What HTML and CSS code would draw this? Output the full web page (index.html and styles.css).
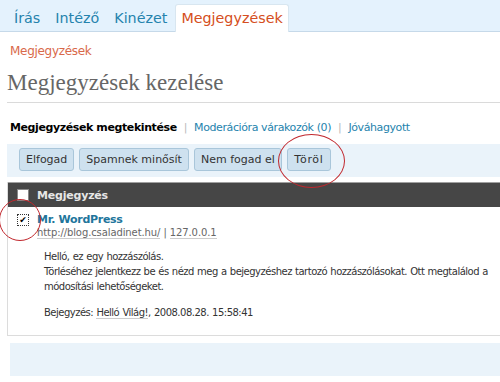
FILE: index.html
```html
<!DOCTYPE html>
<html>
  <head>
    <meta charset="UTF-8">
    <title>Megjegyzések kezelése</title>
    <link rel="stylesheet" href="styles.css">
  </head>
  <body>
    <div class="tabs">
      <a class="tab" href="#">Írás</a>
      <a class="tab" href="#">Intéző</a>
      <a class="tab" href="#">Kinézet</a>
      <a class="tab tab-current" href="#">Megjegyzések</a>
    </div>

    <div class="wrap">
      <div class="crumb">Megjegyzések</div>
      <h2 class="title">Megjegyzések kezelése</h2>

      <ul class="subsubsub">
        <li class="current">Megjegyzések megtekintése</li>
        <li><a href="#">Moderációra várakozók (0)</a></li>
        <li><a href="#">Jóváhagyott</a></li>
      </ul>

      <div class="tablenav">
        <button class="button">Elfogad</button>
        <button class="button">Spamnek minősít</button>
        <button class="button">Nem fogad el</button>
        <button class="button button-wide">Töröl</button>
        <span class="mark mark-delete"></span>
      </div>

      <div class="comments">
        <div class="comments-head">
          <span class="box"></span>
          <span>Megjegyzés</span>
        </div>
        <div class="comment">
          <div class="check-col">
            <span class="box box-checked">&#10004;</span>
            <span class="mark mark-check"></span>
          </div>
          <div class="comment-body">
            <a class="author" href="#">Mr. WordPress</a>
            <div class="author-meta"><span class="u">http://blog.csaladinet.hu/</span> | <span class="u">127.0.0.1</span></div>
            <p>Helló, ez egy hozzászólás.<br>Törléséhez jelentkezz be és nézd meg a bejegyzéshez tartozó hozzászólásokat. Ott megtalálod a módosítási lehetőségeket.</p>
            <p class="post">Bejegyzés: <span class="u">Helló Világ!</span>, 2008.08.28. 15:58:41</p>
          </div>
        </div>
      </div>

      <div class="tablenav tablenav-bottom"></div>
    </div>
  </body>
</html>
```

FILE: styles.css
```css
body {
  margin: 0;
  width: 520px;
  overflow: hidden;
  background: #fff;
  font-family: "DejaVu Sans", Verdana, sans-serif;
  color: #333;
}
a {
  text-decoration: none;
}

.tabs {
  display: flex;
  align-items: flex-end;
  height: 31px;
  padding-left: 7px;
  background: #e4f2fd;
  border-bottom: 1px solid #c6d9e9;
}
.tab {
  padding: 5px 7px 5px;
  font-size: 14.3px;
  color: #2583ad;
  margin-right: 1px;
  border-radius: 3px 3px 0 0;
}
.tab-current {
  background: #fff;
  color: #d54e21;
  margin-bottom: -1px;
  padding: 5px 5px 6px;
  border: 1px solid #d8e6f0;
  border-bottom: none;
}

.wrap {
  padding-left: 7px;
}
.crumb {
  padding: 12px 0 0 3px;
  font-size: 12px;
  letter-spacing: -0.3px;
  color: #d9694a;
}
.title {
  margin: 12px 0 0;
  padding-bottom: 6px;
  border-bottom: 1px solid #dadada;
  font-family: "Liberation Serif", Georgia, serif;
  font-weight: normal;
  font-size: 23px;
  color: #666;
}

.subsubsub {
  display: flex;
  margin: 0;
  padding: 18px 0 0 3px;
  list-style: none;
  font-size: 11px;
  letter-spacing: -0.4px;
}
.subsubsub li + li:before {
  content: "|";
  color: #bbb;
  padding: 0 7px;
}
.subsubsub .current {
  font-weight: bold;
  color: #000;
}
.subsubsub a {
  color: #2583ad;
}

.tablenav {
  position: relative;
  display: flex;
  gap: 5px;
  margin-top: 10px;
  padding: 4px 12px 6px;
  height: 23px;
  background: #eaf3fa;
}
.button {
  padding: 0 6px;
  font-family: inherit;
  font-size: 11px;
  color: #333;
  background: #cee1ef;
  border: 1px solid #a9c6da;
  border-radius: 3px;
}
.button-wide {
  min-width: 44px;
  letter-spacing: 0.6px;
}

.mark {
  position: absolute;
  border: 1px solid #c1272d;
  border-radius: 50%;
}
.mark-delete {
  left: 271px;
  top: -10px;
  width: 65px;
  height: 52px;
}
.mark-check {
  left: -18px;
  top: -14px;
  width: 40px;
  height: 40px;
}

.comments {
  margin-top: 5px;
  border: 1px solid #dcdcdc;
  border-top: none;
}
.comments-head {
  display: flex;
  align-items: center;
  gap: 8px;
  height: 24px;
  padding-left: 9px;
  background: #464646;
  border-top: 1px solid #a0a0a0;
  color: #e6e6e6;
  font-size: 11px;
  font-weight: bold;
  letter-spacing: -0.2px;
}
.box {
  display: block;
  width: 10px;
  height: 10px;
  background: #fff;
  border: 1px solid #888;
}
.box-checked {
  border-style: dotted;
  border-color: #333;
  font-size: 9px;
  line-height: 10px;
  text-align: center;
  color: #000;
}

.comment {
  display: flex;
  gap: 8px;
  padding: 6px 0 15px 9px;
}
.check-col {
  position: relative;
  padding-top: 1px;
}
.comment-body {
  font-size: 10px;
  letter-spacing: -0.15px;
}
.author {
  display: block;
  font-weight: bold;
  font-size: 11px;
  letter-spacing: -0.3px;
  color: #21759b;
}
.author-meta {
  margin-top: 1px;
  letter-spacing: -0.1px;
  color: #666;
}
.u {
  border-bottom: 1px solid #ccc;
}
.comment-body p {
  max-width: 460px;
  margin: 11px 0 0 7px;
  line-height: 15px;
  letter-spacing: -0.5px;
  word-spacing: 0.5px;
}
.comment-body .post {
  margin-top: 11px;
}

.tablenav-bottom {
  margin-top: 7px;
  margin-left: 3px;
  height: 23px;
}
```
